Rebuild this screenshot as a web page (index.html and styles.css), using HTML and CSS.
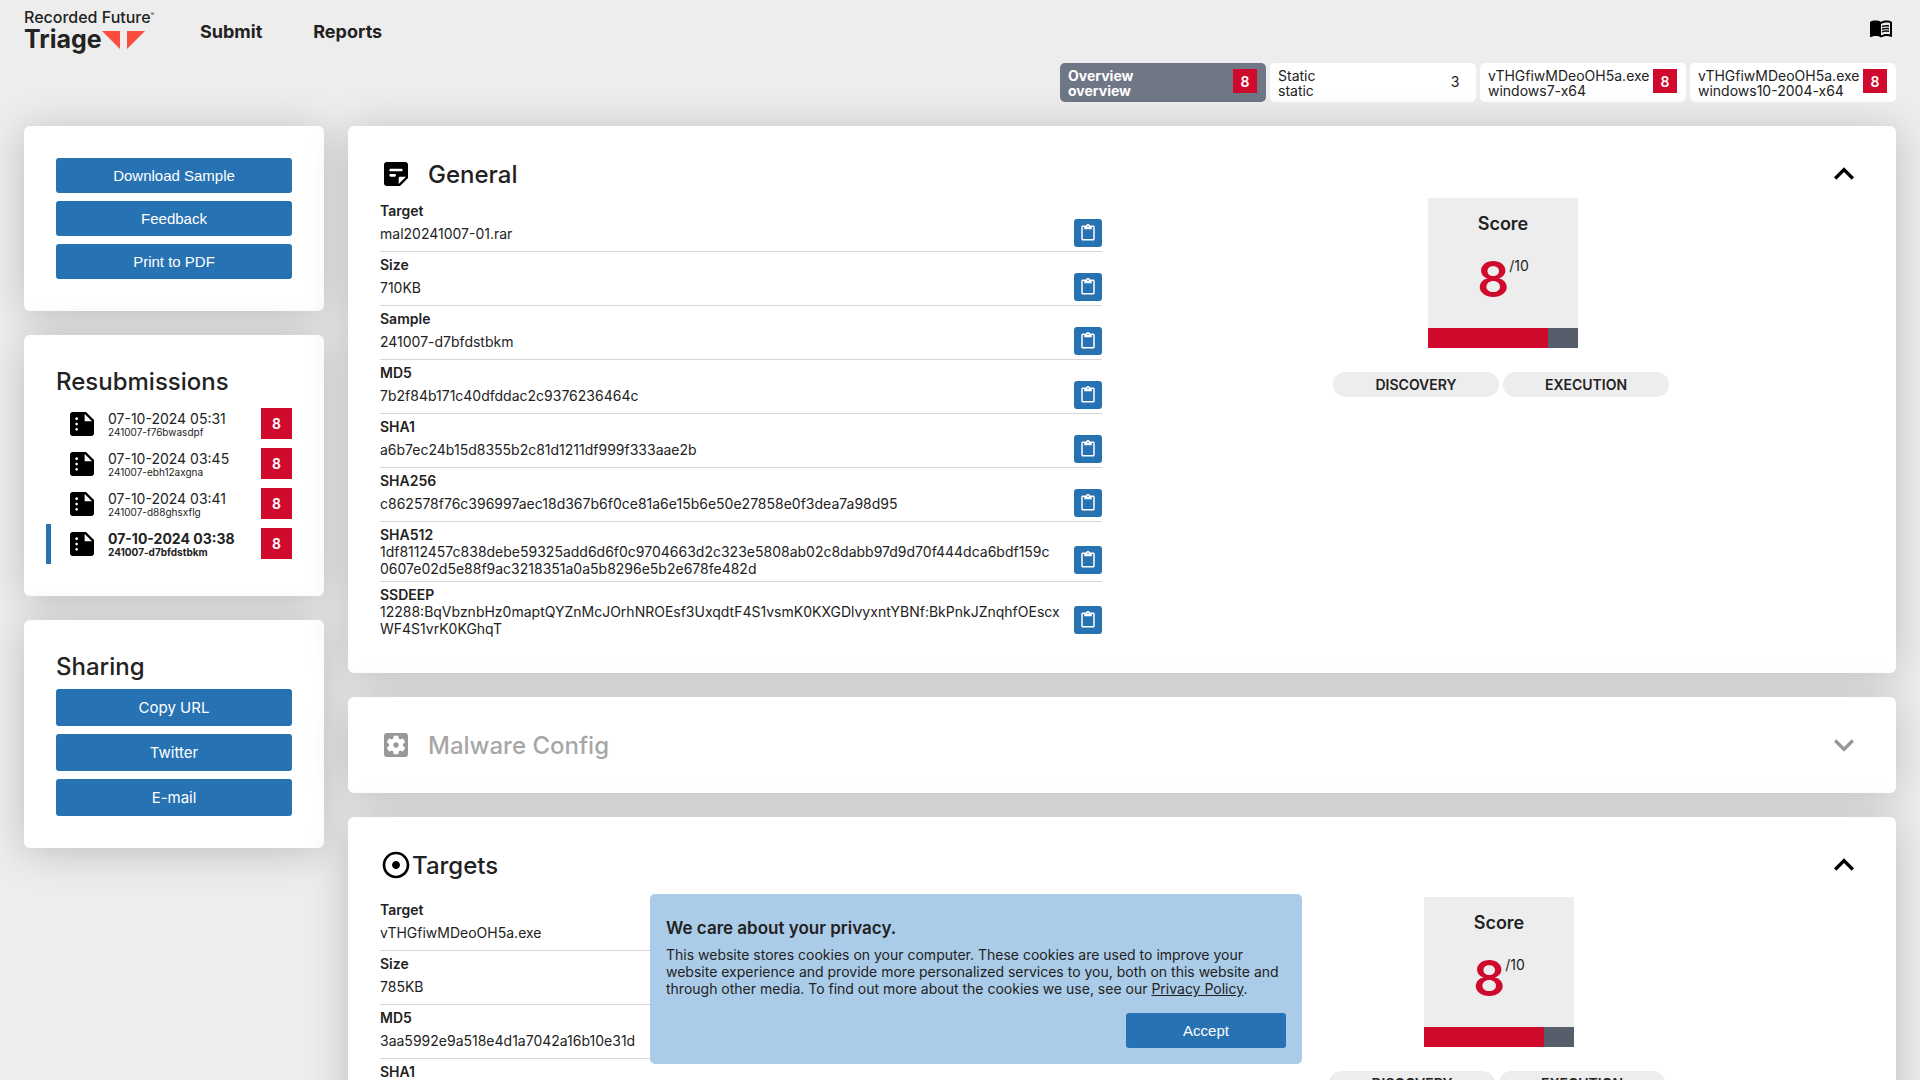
FILE: index.html
```html
<!DOCTYPE html>
<html lang="en">
<head>
  <meta charset="utf-8">
  <meta name="viewport" content="width=device-width, initial-scale=1">
  <title>Triage | Overview</title>
  <link rel="stylesheet" href="styles.css">
</head>
<body>
  <svg class="sprite" aria-hidden="true">
    <symbol id="clipboard" viewBox="0 0 24 24"><path d="M19 2h-4.18C14.4.84 13.3 0 12 0S9.6.84 9.18 2H5c-1.1 0-2 .9-2 2v16c0 1.1.9 2 2 2h14c1.1 0 2-.9 2-2V4c0-1.1-.9-2-2-2zm-7 0c.55 0 1 .45 1 1s-.45 1-1 1-1-.45-1-1 .45-1 1-1zm7 18H5V4h2v3h10V4h2v16z"/></symbol>
    <symbol id="report" viewBox="0 0 24 24"><path d="M15 3H5c-1.100 0-1.990.9-1.990 2L3 19c0 1.100.89 2 1.990 2H19c1.100 0 2-.9 2-2V9l-6-6zM8 17c-.55 0-1-.45-1-1s.45-1 1-1 1 .45 1 1-.45 1-1 1zm0-4c-.55 0-1-.45-1-1s.45-1 1-1 1 .45 1 1-.45 1-1 1zm0-4c-.55 0-1-.45-1-1s.45-1 1-1 1 .45 1 1-.45 1-1 1zm6 1V4.500l5.500 5.500H14z"/></symbol>
    <symbol id="chevron-up" viewBox="0 0 24 24"><path d="M7.410 15.410L12 10.830l4.590 4.580L18 14l-6-6-6 6z"/></symbol>
    <symbol id="chevron-down" viewBox="0 0 24 24"><path d="M7.410 8.590L12 13.170l4.590-4.580L18 10l-6 6-6-6z"/></symbol>
  </svg>

  <header class="topbar">
    <a class="logo" href="#">
      <span class="logo-company">Recorded Future<sup>®</sup></span>
      <span class="logo-product">Triage
        <svg class="logo-mark" viewBox="0 0 43 18" aria-hidden="true"><path d="M0 0h18v18zM25 0h18L25 18z"/></svg>
      </span>
    </a>
    <nav class="nav">
      <a href="#">Submit</a>
      <a href="#">Reports</a>
    </nav>
    <a class="docs" href="#" aria-label="Documentation">
      <svg viewBox="0 0 24 24"><path d="M21 5c-1.110-.35-2.330-.5-3.500-.5-1.950 0-4.050.4-5.500 1.500-1.450-1.100-3.550-1.500-5.500-1.500S2.450 4.900 1 6v14.650c0 .25.25.5.5.5.1 0 .15-.05.25-.05C3.100 20.450 5.050 20 6.500 20c1.950 0 4.050.4 5.500 1.500 1.350-.85 3.800-1.500 5.500-1.500 1.650 0 3.350.3 4.750 1.050.1.05.15.05.25.05.25 0 .5-.25.5-.5V6c-.6-.45-1.250-.75-2-1zm0 13.500c-1.100-.35-2.300-.5-3.500-.5-1.700 0-4.150.65-5.500 1.500V8c1.350-.85 3.800-1.500 5.500-1.500 1.200 0 2.400.15 3.500.5v11.500z"/><path d="M17.500 10.500c.88 0 1.730.09 2.500.26V9.240c-.79-.15-1.640-.24-2.500-.24-1.700 0-3.240.29-4.500.83v1.660c1.130-.64 2.700-.99 4.500-.99zM13 12.490v1.660c1.130-.64 2.700-.99 4.500-.99.88 0 1.730.09 2.500.26V11.900c-.79-.15-1.640-.24-2.500-.24-1.700 0-3.240.3-4.500.83zM17.500 14.330c-1.700 0-3.240.29-4.500.83v1.660c1.130-.64 2.700-.99 4.500-.99.88 0 1.730.09 2.500.26v-1.520c-.79-.16-1.640-.24-2.500-.24z"/></svg>
    </a>
  </header>

  <nav class="tabs" aria-label="Tasks">
    <a class="tab tab-active" href="#"><span class="tab-text">Overview<br>overview</span><span class="tab-score score-high">8</span></a>
    <a class="tab" href="#"><span class="tab-text">Static<br>static</span><span class="tab-score">3</span></a>
    <a class="tab" href="#"><span class="tab-text">vTHGfiwMDeoOH5a.exe<br>windows7-x64</span><span class="tab-score score-high">8</span></a>
    <a class="tab" href="#"><span class="tab-text">vTHGfiwMDeoOH5a.exe<br>windows10-2004-x64</span><span class="tab-score score-high">8</span></a>
  </nav>

  <div class="layout">
    <aside class="sidebar">
      <section class="card side-card stack">
        <button class="btn" type="button">Download Sample</button>
        <button class="btn" type="button">Feedback</button>
        <button class="btn" type="button">Print to PDF</button>
      </section>

      <section class="card side-card">
        <h2 class="title side-title">Resubmissions</h2>
        <a class="resub" href="#"><svg class="resub-icon"><use href="#report"/></svg><span class="resub-text">07-10-2024 05:31<small>241007-f76bwasdpf</small></span><span class="resub-score">8</span></a>
        <a class="resub" href="#"><svg class="resub-icon"><use href="#report"/></svg><span class="resub-text">07-10-2024 03:45<small>241007-ebh12axgna</small></span><span class="resub-score">8</span></a>
        <a class="resub" href="#"><svg class="resub-icon"><use href="#report"/></svg><span class="resub-text">07-10-2024 03:41<small>241007-d88ghsxflg</small></span><span class="resub-score">8</span></a>
        <a class="resub resub-active" href="#"><svg class="resub-icon"><use href="#report"/></svg><span class="resub-text">07-10-2024 03:38<small>241007-d7bfdstbkm</small></span><span class="resub-score">8</span></a>
      </section>

      <section class="card side-card">
        <h2 class="title side-title">Sharing</h2>
        <div class="stack">
          <a class="btn share" href="#">Copy URL</a>
          <a class="btn share" href="#">Twitter</a>
          <a class="btn share" href="#">E-mail</a>
        </div>
      </section>
    </aside>

    <main class="main">
      <section class="card panel">
        <header class="panel-head">
          <svg class="panel-icon" viewBox="0 0 24 24"><path d="M19 3H4.990C3.890 3 3 3.900 3 5l.01 14c0 1.100.89 2 1.990 2h10l6-6V5c0-1.100-.9-2-2-2zM8 8h8c.55 0 1 .45 1 1s-.45 1-1 1H8c-.55 0-1-.45-1-1s.45-1 1-1zm3 6H8c-.55 0-1-.45-1-1s.45-1 1-1h3c.55 0 1 .45 1 1s-.45 1-1 1zm3 5.500V15c0-.55.45-1 1-1h4.500L14 19.500z"/></svg>
          <h1 class="title spaced">General</h1>
          <button class="toggle" type="button" aria-label="Collapse General"><svg><use href="#chevron-up"/></svg></button>
        </header>
        <div class="panel-body">
          <dl class="facts">
            <div class="fact"><dt>Target</dt><dd><span>mal20241007-01.rar</span><button class="copy" type="button" aria-label="Copy target"><svg><use href="#clipboard"/></svg></button></dd></div>
            <div class="fact"><dt>Size</dt><dd><span>710KB</span><button class="copy" type="button" aria-label="Copy size"><svg><use href="#clipboard"/></svg></button></dd></div>
            <div class="fact"><dt>Sample</dt><dd><span>241007-d7bfdstbkm</span><button class="copy" type="button" aria-label="Copy sample"><svg><use href="#clipboard"/></svg></button></dd></div>
            <div class="fact"><dt>MD5</dt><dd><span>7b2f84b171c40dfddac2c9376236464c</span><button class="copy" type="button" aria-label="Copy MD5"><svg><use href="#clipboard"/></svg></button></dd></div>
            <div class="fact"><dt>SHA1</dt><dd><span>a6b7ec24b15d8355b2c81d1211df999f333aae2b</span><button class="copy" type="button" aria-label="Copy SHA1"><svg><use href="#clipboard"/></svg></button></dd></div>
            <div class="fact"><dt>SHA256</dt><dd><span>c862578f76c396997aec18d367b6f0ce81a6e15b6e50e27858e0f3dea7a98d95</span><button class="copy" type="button" aria-label="Copy SHA256"><svg><use href="#clipboard"/></svg></button></dd></div>
            <div class="fact"><dt>SHA512</dt><dd><span>1df8112457c838debe59325add6d6f0c9704663d2c323e5808ab02c8dabb97d9d70f444dca6bdf159c<wbr>0607e02d5e88f9ac3218351a0a5b8296e5b2e678fe482d</span><button class="copy" type="button" aria-label="Copy SHA512"><svg><use href="#clipboard"/></svg></button></dd></div>
            <div class="fact"><dt>SSDEEP</dt><dd><span>12288:BqVbznbHz0maptQYZnMcJOrhNROEsf3UxqdtF4S1vsmK0KXGDlvyxntYBNf:BkPnkJZnqhfOEscxWF4S1vrK0KGhqT</span><button class="copy" type="button" aria-label="Copy SSDEEP"><svg><use href="#clipboard"/></svg></button></dd></div>
          </dl>
          <div class="verdict">
            <div class="score">
              <h3>Score</h3>
              <p class="score-value">8<span>/10</span></p>
              <div class="meter"><div class="meter-fill" style="width: 80%"></div></div>
            </div>
            <div class="tags"><span class="tag">DISCOVERY</span><span class="tag">EXECUTION</span></div>
          </div>
        </div>
      </section>

      <section class="card panel">
        <header class="panel-head panel-disabled">
          <svg class="panel-icon" viewBox="0 0 24 24"><path d="M12 10c-1.100 0-2 .9-2 2s.9 2 2 2 2-.9 2-2-.9-2-2-2zm7-7H5c-1.110 0-2 .9-2 2v14c0 1.100.89 2 2 2h14c1.110 0 2-.9 2-2V5c0-1.100-.89-2-2-2zm-1.750 9c0 .23-.02.46-.05.68l1.480 1.160c.13.11.17.3.08.45l-1.400 2.420c-.09.15-.27.21-.43.15l-1.740-.7c-.36.28-.76.51-1.180.69l-.26 1.850c-.03.17-.18.3-.35.3h-2.800c-.17 0-.32-.13-.35-.29l-.26-1.850c-.43-.18-.82-.41-1.180-.69l-1.740.7c-.16.06-.34 0-.43-.15l-1.400-2.420c-.09-.15-.05-.34.08-.45l1.480-1.160c-.03-.23-.05-.46-.05-.69 0-.23.02-.46.05-.68l-1.480-1.160c-.13-.11-.17-.3-.08-.45l1.400-2.420c.09-.15.27-.21.43-.15l1.740.7c.36-.28.76-.51 1.180-.69l.26-1.850c.03-.17.18-.3.35-.3h2.800c.17 0 .32.13.35.29l.26 1.850c.43.18.82.41 1.180.69l1.740-.7c.16-.06.34 0 .43.15l1.400 2.420c.09.15.05.34-.08.45l-1.480 1.160c.03.23.05.46.05.69z"/></svg>
          <h1 class="title spaced">Malware Config</h1>
          <button class="toggle" type="button" aria-label="Expand Malware Config"><svg><use href="#chevron-down"/></svg></button>
        </header>
      </section>

      <section class="card panel">
        <header class="panel-head">
          <svg class="panel-icon" viewBox="0 0 24 24"><path d="M12 2C6.490 2 2 6.490 2 12s4.490 10 10 10 10-4.490 10-10S17.510 2 12 2zm0 18c-4.410 0-8-3.590-8-8s3.590-8 8-8 8 3.590 8 8-3.590 8-8 8zm3-8c0 1.660-1.340 3-3 3s-3-1.340-3-3 1.340-3 3-3 3 1.340 3 3z"/></svg>
          <h1 class="title">Targets</h1>
          <button class="toggle" type="button" aria-label="Collapse Targets"><svg><use href="#chevron-up"/></svg></button>
        </header>
        <div class="panel-body targets-body">
          <dl class="facts">
            <div class="fact"><dt>Target</dt><dd><span>vTHGfiwMDeoOH5a.exe</span><button class="copy" type="button" aria-label="Copy target"><svg><use href="#clipboard"/></svg></button></dd></div>
            <div class="fact"><dt>Size</dt><dd><span>785KB</span><button class="copy" type="button" aria-label="Copy size"><svg><use href="#clipboard"/></svg></button></dd></div>
            <div class="fact"><dt>MD5</dt><dd><span>3aa5992e9a518e4d1a7042a16b10e31d</span><button class="copy" type="button" aria-label="Copy MD5"><svg><use href="#clipboard"/></svg></button></dd></div>
            <div class="fact"><dt>SHA1</dt><dd><span></span><button class="copy" type="button" aria-label="Copy SHA1"><svg><use href="#clipboard"/></svg></button></dd></div>
          </dl>
          <div class="verdict">
            <div class="score">
              <h3>Score</h3>
              <p class="score-value">8<span>/10</span></p>
              <div class="meter"><div class="meter-fill" style="width: 80%"></div></div>
            </div>
            <div class="tags"><span class="tag">DISCOVERY</span><span class="tag">EXECUTION</span></div>
          </div>
        </div>
      </section>
    </main>
  </div>

  <section class="cookies" role="dialog" aria-labelledby="cookies-title">
    <h2 id="cookies-title">We care about your privacy.</h2>
    <p>This website stores cookies on your computer. These cookies are used to improve your website experience and provide more personalized services to you, both on this website and through other media. To find out more about the cookies we use, see our <a href="#">Privacy Policy</a>.</p>
    <button class="btn accept" type="button">Accept</button>
  </section>
</body>
</html>
```
FILE: styles.css
```css
* {
  box-sizing: border-box;
}

body {
  margin: 0;
  background: #ededed;
  color: #222;
  font: 14px/17px Inter, sans-serif;
}

a {
  color: inherit;
  text-decoration: none;
}

h1, h2, h3, p, dl, dd {
  margin: 0;
}

svg {
  display: block;
}

button {
  border: 0;
  padding: 0;
  cursor: pointer;
}

.sprite {
  display: none;
}

/* Top bar */
.topbar {
  display: flex;
  align-items: flex-start;
  height: 63px;
  padding: 8px 27px 0 24px;
}

.logo {
  width: 126px;
  color: #232323;
  white-space: nowrap;
}

.logo-company {
  display: block;
  font-size: 16px;
  font-weight: 500;
  line-height: 19px;
}

.logo-company sup {
  font-size: 5px;
  line-height: 1;
  vertical-align: 7px;
}

.logo-product {
  display: flex;
  align-items: center;
  font-size: 25px;
  font-weight: 700;
  line-height: 25px;
}

.logo-mark {
  width: 43px;
  height: 18px;
  fill: #fc4c40;
}

.nav {
  display: flex;
  gap: 51px;
  margin: 13px auto 0 50px;
  font-size: 18px;
  font-weight: 700;
  line-height: 22px;
}

.docs {
  padding-top: 8px;
}

.docs svg {
  width: 24px;
  height: 24px;
}

/* Task tabs */
.tabs {
  display: flex;
  justify-content: flex-end;
  gap: 4px;
  padding: 0 24px;
}

.tab {
  display: flex;
  justify-content: space-between;
  width: 206px;
  height: 39px;
  padding: 5px 9px 0 8px;
  border-radius: 5px;
  background: #fff;
}

.tab-text {
  line-height: 15px;
}

.tab-active {
  background: #6f7686;
  color: #fff;
  font-weight: 700;
}

.tab-score {
  width: 24px;
  height: 24px;
  margin-top: 1px;
  line-height: 25px;
  text-align: center;
}

.score-high {
  background: #cf0a2c;
  color: #fff;
  font-weight: 600;
}

/* Page columns */
.layout {
  display: grid;
  grid-template-columns: 300px minmax(0, 1fr);
  align-items: start;
  gap: 24px;
  padding: 24px;
}

.sidebar,
.main {
  display: grid;
  gap: 24px;
}

.card {
  border-radius: 6px;
  background: #fff;
  box-shadow: 0 4px 40px rgba(0, 0, 0, .2);
}

.side-card {
  padding: 32px;
}

.stack {
  display: grid;
  gap: 8px;
}

.title {
  font-size: 24px;
  font-weight: 500;
  line-height: 29px;
}

.side-title {
  margin-bottom: 8px;
}

.btn {
  height: 35px;
  border-radius: 3px;
  background: #2672b3;
  color: #fff;
  font: 15px/35px "Liberation Sans", Arial, sans-serif;
  text-align: center;
}

.share {
  height: 37px;
  font: 15px/37px Inter, sans-serif;
}

/* Resubmissions */
.resub {
  display: flex;
  align-items: center;
  height: 40px;
  margin-left: -10px;
  padding-left: 15px;
  border-left: 5px solid transparent;
}

.resub-active {
  border-left-color: #2672b3;
  font-weight: 700;
}

.resub-icon {
  width: 32px;
  height: 32px;
  fill: #000;
}

.resub-text {
  flex: 1;
  padding-left: 10px;
}

.resub-text small {
  display: block;
  font-size: 10px;
  line-height: 11px;
}

.resub-score {
  width: 31px;
  height: 31px;
  margin-bottom: 1px;
  background: #cf0a2c;
  color: #fff;
  font-weight: 600;
  line-height: 31px;
  text-align: center;
}

/* Panels */
.panel {
  padding: 28px 32px;
}

.panel-head {
  display: flex;
  align-items: center;
  height: 40px;
}

.panel-disabled {
  opacity: .4;
}

.panel-icon {
  width: 32px;
  height: 32px;
}

.spaced {
  margin-left: 16px;
}

.toggle {
  margin-left: auto;
  background: none;
}

.toggle svg {
  width: 40px;
  height: 40px;
}

.panel-body {
  display: grid;
  grid-template-columns: repeat(2, minmax(0, 1fr));
  gap: 40px;
  padding: 4px 0;
}

.targets-body {
  gap: 48px;
  padding: 12px 8px 4px 0;
}

.fact {
  padding: 4px 0;
  border-bottom: 1px solid #d6d6d6;
}

.fact:last-child {
  border-bottom: 0;
}

.fact dt {
  font-weight: 600;
}

.fact dd {
  display: flex;
  align-items: center;
  justify-content: space-between;
  gap: 12px;
  overflow-wrap: anywhere;
}

.copy {
  flex: none;
  display: grid;
  place-items: center;
  width: 28px;
  height: 28px;
  border-radius: 3px;
  background: #2672b3;
  color: #fff;
}

.copy svg {
  width: 18px;
  height: 18px;
  fill: #fff;
}

.verdict {
  display: flex;
  flex-direction: column;
  align-items: center;
  gap: 24px;
}

.score {
  display: flex;
  flex-direction: column;
  width: 150px;
  height: 150px;
  padding-top: 15px;
  background: #ededed;
  text-align: center;
}

.score h3 {
  font-size: 18px;
  font-weight: 600;
  line-height: 22px;
}

.score-value {
  display: flex;
  justify-content: center;
  padding-top: 14px;
  color: #cf0a2c;
  font-size: 50px;
  font-weight: 600;
  line-height: 60px;
}

.score-value span {
  padding-top: 8px;
  color: #222;
  font-size: 14px;
  font-weight: 400;
  line-height: 17px;
}

.meter {
  height: 20px;
  margin-top: auto;
  background: #575e6b;
}

.meter-fill {
  height: 100%;
  background: #cf0a2c;
}

.tags {
  display: flex;
}

.tag {
  width: 166px;
  margin-right: 4px;
  border-radius: 13px;
  background: #ededed;
  font-weight: 600;
  line-height: 25px;
  text-align: center;
}

/* Cookie notice */
.cookies {
  position: fixed;
  bottom: 16px;
  left: calc(50% - 310px);
  width: 652px;
  padding: 24px 16px 16px;
  border-radius: 5px;
  background: #abcce8;
}

.cookies h2 {
  margin-bottom: 8px;
  font-size: 17px;
  font-weight: 600;
  line-height: 20px;
}

.cookies a {
  text-decoration: underline;
}

.accept {
  display: block;
  width: 160px;
  margin: 16px 0 0 auto;
}
```
